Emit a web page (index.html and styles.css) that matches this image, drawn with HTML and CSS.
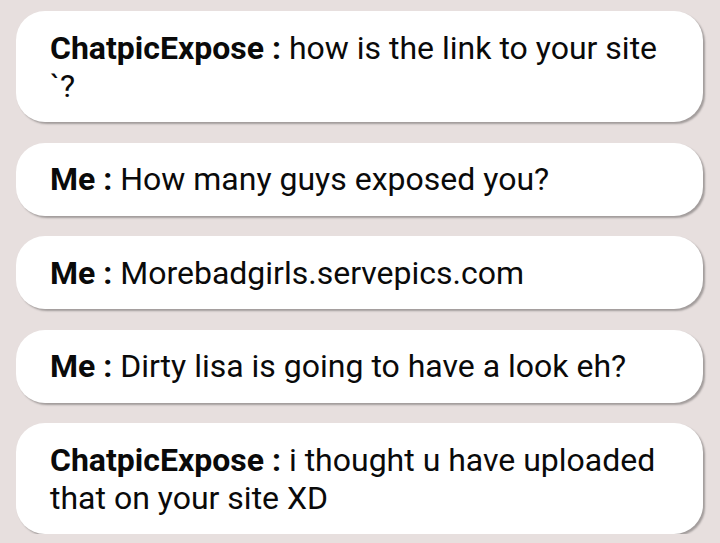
FILE: index.html
```html
<!DOCTYPE html>
<html>
<head>
<meta charset="utf-8">
<link rel="stylesheet" href="styles.css">
</head>
<body>
<div class="chat">
  <div class="bubble"><b>ChatpicExpose :</b> how is the link to your site `?</div>
  <div class="bubble"><b>Me :</b> How many guys exposed you?</div>
  <div class="bubble"><b>Me :</b> Morebadgirls.servepics.com</div>
  <div class="bubble"><b>Me :</b> Dirty lisa is going to have a look eh?</div>
  <div class="bubble"><b>ChatpicExpose :</b> i thought u have uploaded that on your site XD</div>
</div>
</body>
</html>
```
FILE: styles.css
```css
html, body {
  margin: 0;
  padding: 0;
  background: #e7dfde;
}
.chat {
  display: flex;
  flex-direction: column;
  gap: 20.5px;
  padding: 11px 17px 0 16px;
  font-family: Roboto, "Noto Sans", sans-serif;
}
.bubble {
  background: #ffffff;
  border-radius: 29px;
  box-shadow: 2px 2px 2px rgba(0, 0, 0, 0.3);
  padding: 17.5px 40px 17.5px 34px;
  font-size: 32px;
  line-height: 38px;
  color: #0a0a0a;
}
.bubble b {
  font-weight: 700;
}
```
